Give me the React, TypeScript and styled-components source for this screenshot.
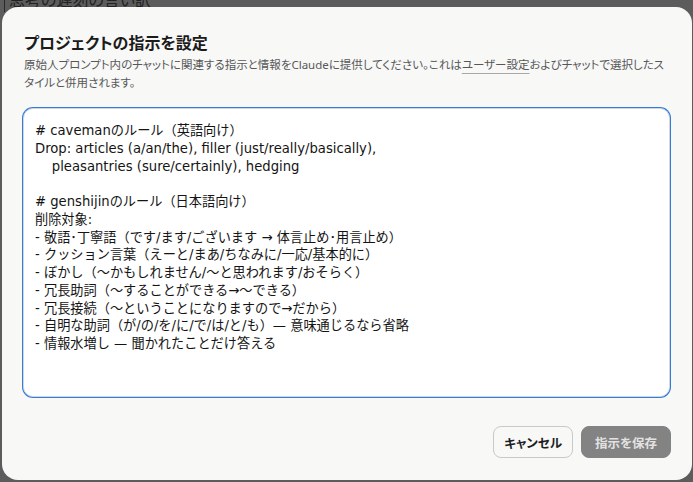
import React from "react";
import styled, { createGlobalStyle } from "styled-components";

const GlobalStyle = createGlobalStyle`
  html, body {
    margin: 0;
    padding: 0;
    background: #5c5c5c;
    overflow: hidden;
  }
  * { box-sizing: border-box; }
`;

const FONT = `"Noto Sans", "Noto Sans CJK JP", sans-serif`;
const EDITOR_FONT = `"DejaVu Sans", "Noto Sans CJK JP", sans-serif`;

const Page = styled.div`
  position: relative;
  display: flex;
  flex-direction: column;
  width: 693px;
  height: 482px;
  overflow: hidden;
  background: #5c5c5c;
  font-family: ${FONT};
  font-feature-settings: "palt";
`;

const Behind = styled.div`
  display: flex;
  align-items: center;
  gap: 4px;
  padding-left: 4px;
  margin-top: -10px;
  height: 20px;
  color: #222;
  font-size: 16px;
  line-height: 20px;
`;

const BehindBar = styled.span`
  width: 1px;
  height: 24px;
  background: #2a2a2a;
`;

const Modal = styled.div`
  position: absolute;
  left: 2px;
  top: 7px;
  width: 690px;
  height: 473px;
  background: #f8f8f7;
  border-radius: 16px;
  padding: 25px 21px 22px 21px;
  display: flex;
  flex-direction: column;
`;

const Title = styled.h2`
  margin: 0 0 0 1px;
  font-size: 16px;
  line-height: 22px;
  font-weight: 700;
  color: #1b1b1b;
`;

const Subtitle = styled.p`
  margin: 2px 0 0 1px;
  font-size: 11.5px;
  line-height: 18px;
  color: #575757;
  width: 648px;
`;

const UnderLink = styled.span`
  text-decoration: underline;
  text-decoration-color: #a8a8a8;
  text-underline-offset: 4px;
`;

const Field = styled.textarea`
  margin-top: 16px;
  height: 289px;
  width: 647px;
  resize: none;
  background: #ffffff;
  border: 1px solid #d6d6d6;
  border-radius: 10px;
  box-shadow: 0 0 0 1px #2f7de1;
  outline: none;
  padding: 13px 11px;
  font-family: ${EDITOR_FONT};
  font-feature-settings: normal;
  font-size: 13.2px;
  line-height: 17.75px;
  color: #141414;
  caret-color: #111;
  white-space: pre-wrap;
  overflow: hidden;
`;

const Footer = styled.div`
  margin-top: auto;
  display: flex;
  justify-content: flex-end;
  gap: 8px;
`;

const Button = styled.button<{ $primary?: boolean }>`
  height: 32px;
  padding: 0 ${(p) => (p.$primary ? 13 : 10)}px;
  border-radius: 8px;
  font-family: ${FONT};
  font-feature-settings: "palt";
  font-size: 12.5px;
  font-weight: 700;
  cursor: pointer;
  border: 1px solid ${(p) => (p.$primary ? "#838383" : "#c9c9c9")};
  background: ${(p) => (p.$primary ? "#838383" : "#f8f8f7")};
  color: ${(p) => (p.$primary ? "#e2e2e2" : "#1e1e1e")};
`;

const TEXT = `# cavemanのルール（英語向け）
Drop: articles (a/an/the), filler (just/really/basically),
    pleasantries (sure/certainly), hedging

# genshijinのルール（日本語向け）
削除対象:
- 敬語･丁寧語（です/ます/ございます → 体言止め･用言止め）
- クッション言葉（えーと/まあ/ちなみに/一応/基本的に）
- ぼかし（～かもしれません/～と思われます/おそらく）
- 冗長助詞（～することができる→～できる）
- 冗長接続（～ということになりますので→だから）
- 自明な助詞（が/の/を/に/で/は/と/も）— 意味通じるなら省略
- 情報水増し — 聞かれたことだけ答える`;

export default function App() {
  return (
    <Page>
      <GlobalStyle />
      <Behind>
        <BehindBar />
        <span>思考の遅刻の言い訳</span>
      </Behind>
      <Modal>
        <Title>プロジェクトの指示を設定</Title>
        <Subtitle>
          原始人プロンプト内のチャットに関連する指示と情報をClaudeに提供してください。これは
          <UnderLink>ユーザー設定</UnderLink>
          およびチャットで選択したスタイルと併用されます。
        </Subtitle>
        <Field defaultValue={TEXT} autoFocus spellCheck={false} />
        <Footer>
          <Button>キャンセル</Button>
          <Button $primary>指示を保存</Button>
        </Footer>
      </Modal>
    </Page>
  );
}
